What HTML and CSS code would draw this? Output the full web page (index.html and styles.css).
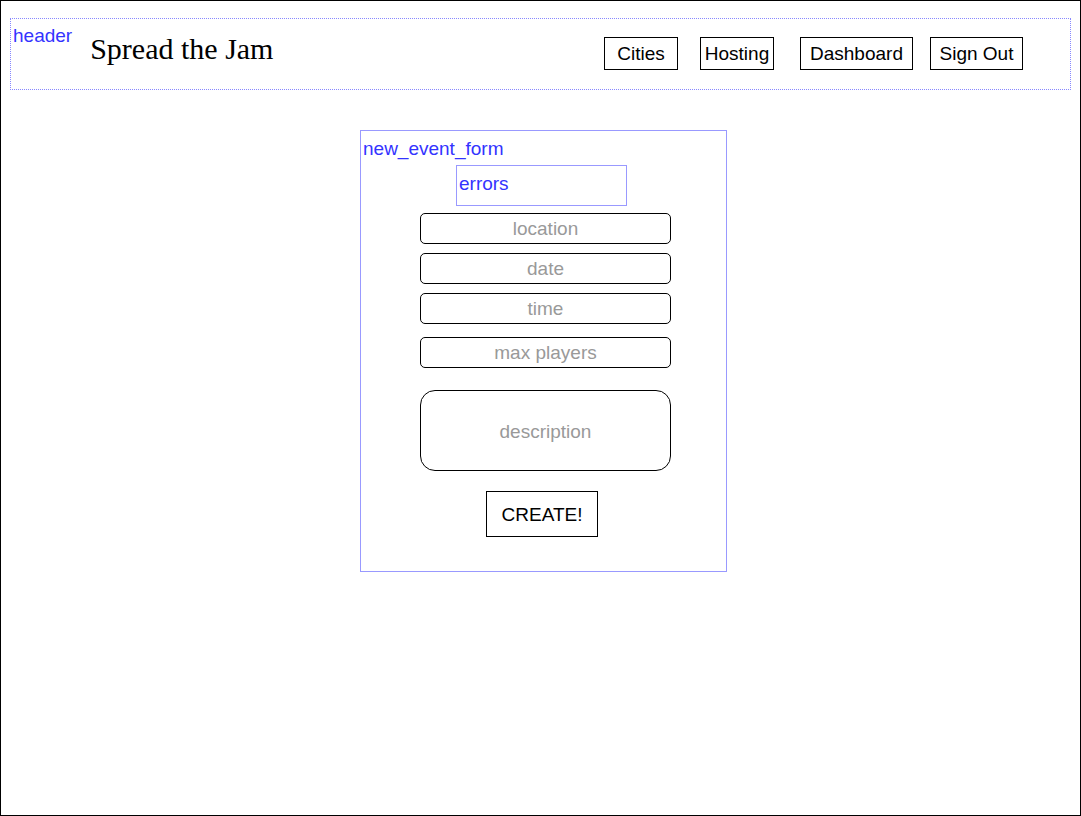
FILE: index.html
```html
<!DOCTYPE html>
<html lang="en">
<head>
<meta charset="utf-8">
<title>Spread the Jam</title>
<link rel="stylesheet" href="styles.css">
</head>
<body>
<div class="page">
  <header class="header">
    <span class="box-label header-label">header</span>
    <h1 class="title">Spread the Jam</h1>
    <nav class="nav">
      <button class="nav-btn btn-cities">Cities</button>
      <button class="nav-btn btn-hosting">Hosting</button>
      <button class="nav-btn btn-dashboard">Dashboard</button>
      <button class="nav-btn btn-signout">Sign Out</button>
    </nav>
  </header>
  <form class="event-form">
    <span class="box-label form-label">new_event_form</span>
    <div class="errors">errors</div>
    <input class="field f-location" type="text" placeholder="location">
    <input class="field f-date" type="text" placeholder="date">
    <input class="field f-time" type="text" placeholder="time">
    <input class="field f-max" type="text" placeholder="max players">
    <textarea class="field f-desc" placeholder="description"></textarea>
    <button class="create-btn" type="button">CREATE!</button>
  </form>
</div>
</body>
</html>
```

FILE: styles.css
```css
html, body {
  margin: 0;
  padding: 0;
  background: #fff;
}

body {
  font-family: "Liberation Sans", Arial, sans-serif;
  font-size: 19px;
  line-height: 22px;
  color: #000;
}

.page {
  width: 1081px;
  height: 816px;
  box-sizing: border-box;
  border: 1px solid #000;
  overflow: hidden;
}

.header {
  margin: 17px 9px 0 9px;
  height: 72px;
  box-sizing: border-box;
  border: 1px dotted #8888ff;
  display: flex;
  align-items: flex-start;
}

.box-label {
  color: #3333ff;
  font-size: 19px;
  line-height: 22px;
}

.header-label {
  margin: 6px 0 0 2px;
}

.title {
  margin: 13px 0 0 18px;
  font-family: "Liberation Serif", "Times New Roman", serif;
  font-weight: normal;
  font-size: 30px;
  line-height: 34px;
}

.nav {
  display: flex;
  margin: 18px 47px 0 auto;
}

.nav-btn {
  height: 33px;
  box-sizing: border-box;
  border: 1px solid #000;
  background: #fff;
  padding: 0;
  font-family: "Liberation Sans", Arial, sans-serif;
  font-size: 19px;
  line-height: 22px;
  color: #000;
  display: flex;
  align-items: center;
  justify-content: center;
}

.btn-cities { width: 74px; }
.btn-hosting { width: 74px; margin-left: 22px; }
.btn-dashboard { width: 113px; margin-left: 26px; }
.btn-signout { width: 93px; margin-left: 17px; }

.event-form {
  margin: 40px 0 0 359px;
  width: 367px;
  height: 442px;
  box-sizing: border-box;
  border: 1px solid #9999ff;
  display: flex;
  flex-direction: column;
  align-items: flex-start;
}

.form-label {
  margin: 7px 0 0 2px;
}

.errors {
  margin: 5px 0 0 95px;
  width: 171px;
  height: 41px;
  box-sizing: border-box;
  border: 1px solid #9999ff;
  padding: 7px 2px 0 2px;
  color: #3333ff;
}

.field {
  display: block;
  margin: 0 0 0 59px;
  width: 251px;
  height: 31px;
  box-sizing: border-box;
  border: 1px solid #000;
  border-radius: 5px;
  padding: 0;
  background: #fff;
  font-family: "Liberation Sans", Arial, sans-serif;
  font-size: 19px;
  line-height: 22px;
  text-align: center;
  color: #000;
  outline: none;
}

.field::placeholder {
  color: #999999;
  opacity: 1;
}

.f-location { margin-top: 7px; }
.f-date { margin-top: 9px; }
.f-time { margin-top: 9px; }
.f-max { margin-top: 13px; }

.f-desc {
  margin-top: 22px;
  height: 81px;
  border-radius: 15px;
  padding-top: 30px;
  resize: none;
  overflow: hidden;
}

.create-btn {
  margin: 20px 0 0 125px;
  width: 112px;
  height: 46px;
  box-sizing: border-box;
  border: 1px solid #000;
  background: #fff;
  padding: 2px 0 0 0;
  font-family: "Liberation Sans", Arial, sans-serif;
  font-size: 19px;
  line-height: 22px;
  color: #000;
}
```
